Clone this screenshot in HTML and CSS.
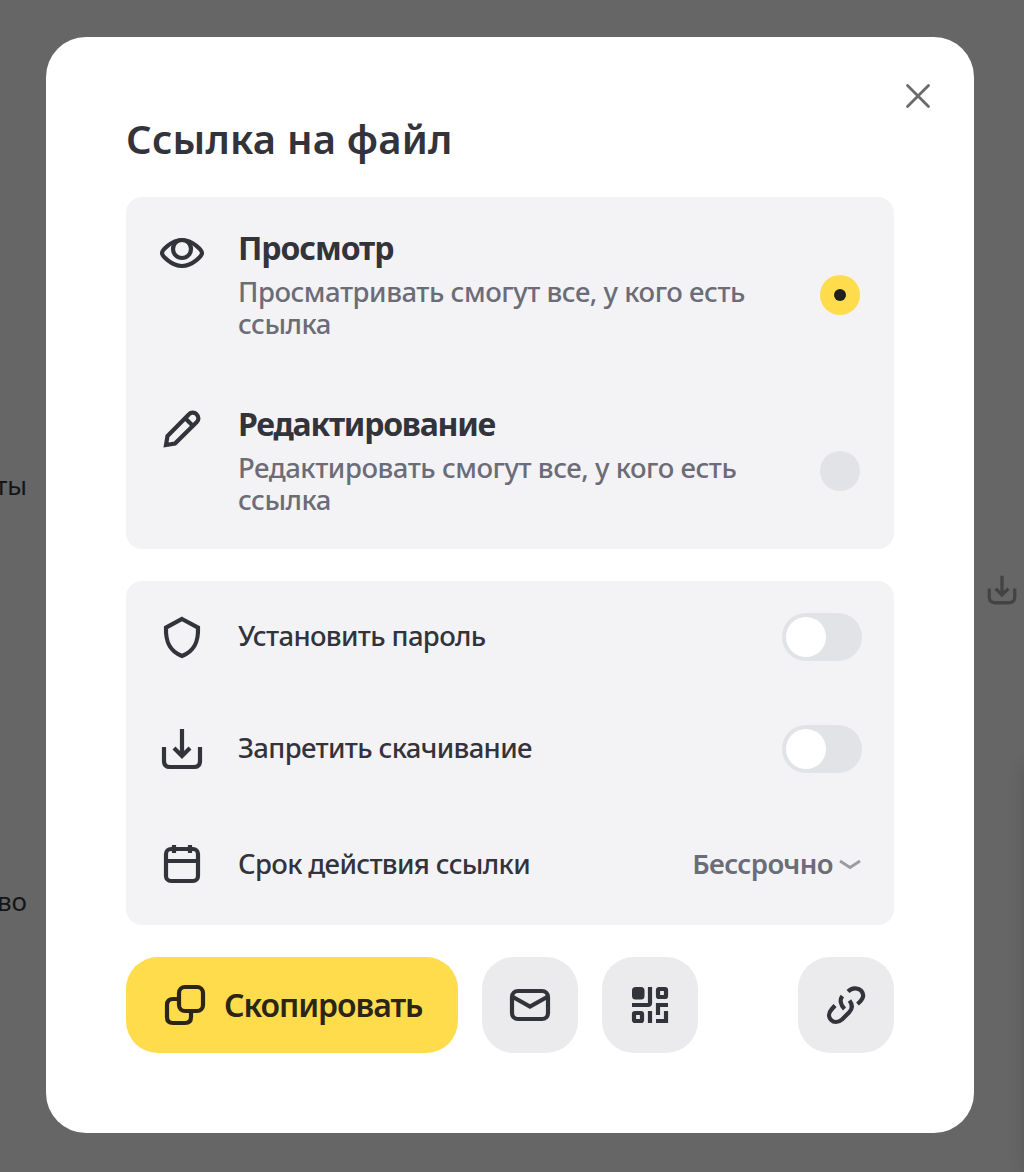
FILE: index.html
```html
<!DOCTYPE html>
<html lang="ru">
<head>
<meta charset="utf-8">
<title>Ссылка на файл</title>
<link rel="stylesheet" href="styles.css">
</head>
<body>
<div class="backdrop" aria-hidden="true">
  <span class="peek peek-first">ты</span>
  <span class="peek peek-second">во</span>
  <svg class="peek-icon" viewBox="0 0 48 48"><path d="M6 22V34Q6 42 14 42H34Q42 42 42 34V22M24 4V30M15 22L24 31L33 22"/></svg>
  <div class="peek-panel"></div>
</div>
<main class="modal">
  <button class="close" aria-label="Закрыть"><svg viewBox="0 0 24 24"><path d="M1.500 1.500L22.500 22.500M22.500 1.500L1.500 22.500"/></svg></button>
  <h1 class="title">Ссылка на файл</h1>
  <section class="card">
    <div class="option">
      <svg class="icon" viewBox="0 0 48 48"><path d="M4 24C4 21.500 13 11 24 11S44 21.500 44 24S35 37 24 37S4 26.500 4 24Z"/><circle cx="24" cy="20" r="9"/></svg>
      <div class="option-text">
        <h2 class="option-name">Просмотр</h2>
        <p class="option-note">Просматривать смогут все, у кого есть<br>ссылка</p>
      </div>
      <span class="radio radio-on"></span>
    </div>
    <div class="option">
      <svg class="icon" viewBox="0 0 48 48"><path d="M8 40L9.500 31L31 9.200C33 7 36.500 7 38.500 9.200C41 11.500 41 15 38.800 17L17 38.500ZM27.500 13.500L34.500 20.500"/></svg>
      <div class="option-text">
        <h2 class="option-name option-name-long">Редактирование</h2>
        <p class="option-note">Редактировать смогут все, у кого есть<br>ссылка</p>
      </div>
      <span class="radio"></span>
    </div>
  </section>
  <section class="card settings">
    <div class="setting">
      <svg class="icon" viewBox="0 0 48 48"><path d="M24 6L40 14.600C40.500 28 37 38 24 43C11 38 7.500 28 8 14.600Z"/></svg>
      <span class="setting-name">Установить пароль</span>
      <span class="switch"></span>
    </div>
    <div class="setting">
      <svg class="icon" viewBox="0 0 48 48"><path d="M6 22V36Q6 42 12 42H36Q42 42 42 36V22M24 4V30M16 23L24 31L32 23"/></svg>
      <span class="setting-name">Запретить скачивание</span>
      <span class="switch"></span>
    </div>
    <div class="setting setting-last">
      <svg class="icon" viewBox="0 0 48 48"><rect x="8" y="8" width="32" height="32" rx="5"/><path d="M8 20H40M16 4V12M32 4V12"/></svg>
      <span class="setting-name">Срок действия ссылки</span>
      <span class="select">Бессрочно<svg class="chevron" viewBox="0 0 22 12"><path d="M1 2L11 8.500L21 2"/></svg></span>
    </div>
  </section>
  <div class="actions">
    <button class="action action-copy">
      <svg class="icon" viewBox="0 0 48 48"><rect x="18" y="6" width="24" height="24" rx="6"/><path d="M18 18H12Q6 18 6 24V36Q6 42 12 42H24Q30 42 30 36V30"/></svg>
      <span>Скопировать</span>
    </button>
    <button class="action" aria-label="Почта"><svg class="icon" viewBox="0 0 48 48"><rect x="6" y="10" width="36" height="28" rx="6"/><path d="M6 15.500L24 25.500L42 15.500"/></svg></button>
    <button class="action" aria-label="QR-код"><svg class="icon" viewBox="0 0 48 48"><rect class="solid" x="6" y="6" width="12.500" height="12.500" rx="3.500"/><path d="M6 24H22Q24 24 24 22V6M24 30V42M42 24H32V34M40 30V40H30"/><rect x="32" y="8" width="8" height="8" rx="1"/><rect x="8" y="32" width="8" height="8" rx="1"/></svg></button>
    <button class="action action-link" aria-label="Ссылка"><svg class="icon" viewBox="0 0 48 48"><path d="M13 24.500L9.500 28.500C2.500 36 12 45.500 20 38.500L27 31.500C30.500 28 30.500 23.500 27.500 19.500M20.300 15C17.500 19 18.500 24 22.500 28M26 10.500C30 6.500 36 6.500 39 9.500C42.500 13.500 42 17.500 35.500 23"/></svg></button>
  </div>
</main>
</body>
</html>
```
FILE: styles.css
```css
* { box-sizing: border-box; }
body {
  margin: 0;
  height: 1172px;
  padding: 37px 46px 0;
  overflow: hidden;
  background: #666;
  color: #33333b;
  font-family: "Noto Sans", "Open Sans", sans-serif;
  font-size: 27.5px;
}
h1, h2, p { margin: 0; }
button { border: 0; padding: 0; font: inherit; color: inherit; }

.peek { position: absolute; right: 997px; font-size: 26px; line-height: 36px; color: #151517; }
.peek-first { top: 467px; }
.peek-second { top: 883px; }
.peek-icon { position: absolute; left: 985px; top: 573px; width: 34px; height: 34px; fill: none; stroke: #434345; stroke-width: 4.6; }
.peek-panel { position: absolute; left: 1028px; top: 766px; width: 40px; height: 406px; box-shadow: 0 0 20px rgba(0, 0, 0, .22); }

.modal {
  position: relative;
  width: 928px;
  height: 1096px;
  padding: 74px 80px 0;
  border-radius: 40px;
  background: #fff;
}
.close { position: absolute; right: 44px; top: 47px; width: 24px; height: 24px; background: none; }
.close svg { display: block; width: 24px; height: 24px; overflow: visible; fill: none; stroke: #68686d; stroke-width: 2.8; stroke-linecap: round; }
.title { height: 86px; font-size: 40px; line-height: 56px; font-weight: 600; letter-spacing: .2px; white-space: nowrap; }

.card { padding-right: 32px; border-radius: 16px; background: #f3f3f6; }
.settings { margin: 32px 0; }
.icon { flex: none; width: 48px; height: 48px; fill: none; stroke: currentColor; stroke-width: 4.2; }
.icon .solid { fill: currentColor; stroke: none; }

.option { display: flex; height: 176px; padding: 32px 0 0 32px; }
.option-text { flex: 1; margin-left: 32px; padding-top: 1px; white-space: nowrap; }
.option-name { margin-bottom: 10px; font-size: 32px; line-height: 36px; font-weight: 700; letter-spacing: -1.1px; }
.option-name-long { letter-spacing: -1.25px; }
.option-note { line-height: 32px; font-weight: 500; letter-spacing: -.46px; color: #6c6c78; }
.radio { flex: none; display: flex; align-items: center; justify-content: center; width: 40px; height: 40px; margin: 46px 2px 0 0; border-radius: 50%; background: #e2e3e6; }
.radio-on { background: #ffdc4c; }
.radio-on::after { content: ""; width: 12px; height: 12px; border-radius: 50%; background: #21201f; }

.setting { display: flex; align-items: center; height: 112px; padding-left: 32px; }
.setting-last { height: 120px; }
.setting-name { flex: 1; margin-left: 32px; padding-bottom: 4px; font-weight: 500; letter-spacing: -.65px; white-space: nowrap; }
.switch { display: flex; align-items: center; width: 80px; height: 48px; padding: 4px; border-radius: 24px; background: #e2e3e6; }
.switch::after { content: ""; width: 40px; height: 40px; border-radius: 50%; background: #fff; }
.select { display: flex; align-items: center; gap: 6px; padding: 0 1px 4px 0; font-weight: 650; letter-spacing: -.6px; color: #6c6c78; }
.chevron { width: 22px; height: 12px; margin-top: 4px; fill: none; stroke: #9b9ba2; stroke-width: 2.8; }

.actions { display: flex; gap: 24px; }
.action { display: flex; align-items: center; justify-content: center; width: 96px; height: 96px; border-radius: 32px; background: #ebebed; }
.action-copy { justify-content: flex-start; gap: 15px; width: 332px; padding-left: 35px; background: #ffdc4c; color: #2b2517; font-size: 32px; font-weight: 600; letter-spacing: -1.05px; white-space: nowrap; }
.action-copy span { padding-bottom: 1px; }
.action-link { margin-left: auto; }
```
